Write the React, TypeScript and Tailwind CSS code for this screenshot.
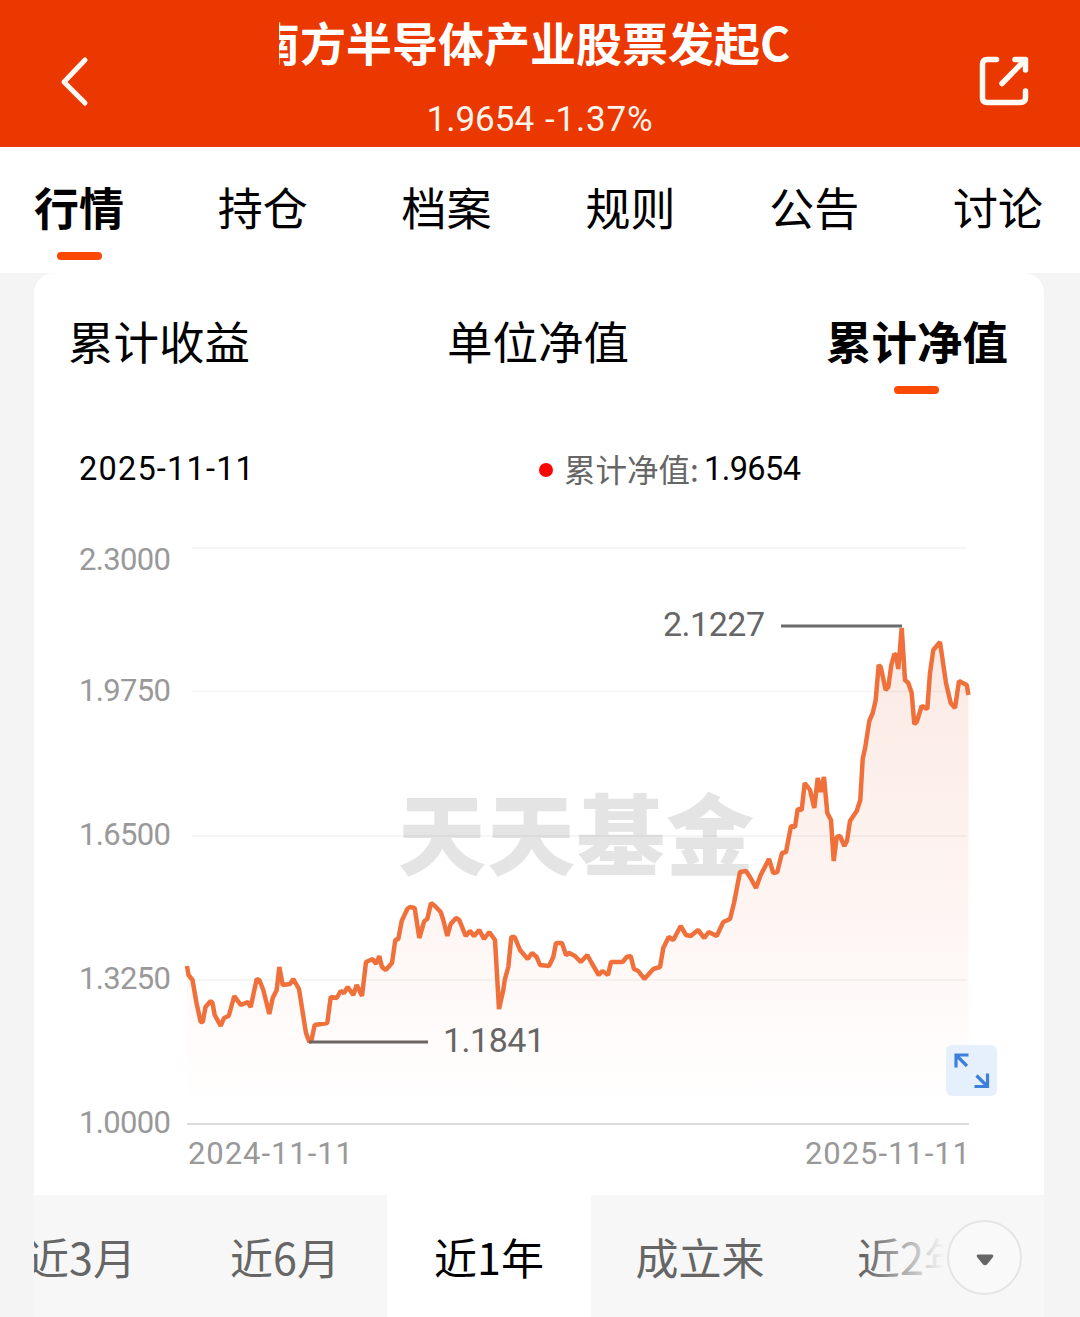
import { useState } from "react";

interface AxisLabel {
    value: string;
    y: number;
    gridY: number;
}

const pageTabs = ["行情", "持仓", "档案", "规则", "公告", "讨论"];
const chartTabs = ["累计收益", "单位净值", "累计净值"];

const ranges = [
    { label: "近3月", width: "w-[204px]" },
    { label: "近6月", width: "w-[204px]" },
    { label: "近1年", width: "w-[204px]" },
    { label: "成立来", width: "w-[218px]" },
    { label: "近2年", width: "w-[206px]" },
];

const axisLabels: AxisLabel[] = [
    { value: "2.3000", y: 570, gridY: 548 },
    { value: "1.9750", y: 701, gridY: 691.5 },
    { value: "1.6500", y: 845, gridY: 836 },
    { value: "1.3250", y: 989, gridY: 980 },
];

// Net value curve, left to right
const curve = [
    "187,966 188.5,975 192.5,980 196.5,1003 200.7,1022 202.7,1022 205.5,1007 210.7,1001 212.5,1003 214.7,1015 220.7,1026 224,1018 228.7,1016",
    "234.3,996 240.7,1005 247.7,1002 250.7,1007 256.7,979 259.3,980 263.3,990 269.3,1014 272.7,998 276.7,990 279.3,967 282.7,985 290,984",
    "293.3,979 299,989 306,1033 309.3,1042 311.5,1040 314.7,1025 327.3,1023 330.7,997 336.7,998 340.7,991 344,993 347.7,987 353.3,995",
    "356.7,985 362,996 366,962 372.7,959 376,964 379.3,956 382,967 385.7,970 392,963 395.3,940 398.3,939 401.7,921 407.3,909 410,907",
    "414.7,908 419.3,938 424.3,921 427.3,919 431,903 435,906 440.7,912 443.3,920 447.3,936 450.7,924 456,918 459.3,920 465.7,936 470,931",
    "474,936 479.3,930 484,939 489.3,932 495,940 499,1009 503.3,990 504.7,980 508.3,967 511.3,937 514.7,937 520,950 527.7,959 532,953",
    "536.7,957 540,965 549,966 553.3,957 556,943 562,943 566,955 569.3,953 575,956 580.7,962 587.3,955 591.7,963 598.7,975 602.3,971",
    "608,975 611,962 622.7,962 626.7,957 630.7,956 634,969 638.3,971 644.3,979 653.3,969 660,967 663.3,948 668.7,937 673.3,940 680.7,926",
    "686,935 690.7,936 698,930 704.3,938 708.7,932 716.7,936 723.3,922 730,919 734,903 740,872 746,871 750,877 756,888 760.7,875 769,859",
    "773.3,873 777.3,872 782,853 786,852 791,826 795,827 797.7,809 801.7,810 804.7,783 810,790 814.3,808 817.7,778 820.7,792 824,777",
    "827.3,813 831,820 833.7,861 836.7,837 840,836 844.3,846 847,841 850,821 856.7,811 860.3,800 862.7,759 865.3,747 869.3,721 872.7,713",
    "875.7,700 878.7,665 880.7,667 885.7,690 888.3,687 891.3,665 894.3,654 896,655 898.3,669 901.7,628 905,680 908.3,683 911.7,693",
    "914.3,724 916.7,722 921.7,706 927.3,709 930,673 933.3,650 940,642 946,683 950.7,703 955,708 959,681 966.7,685 968.5,695",
].join(" ");

function NetValueChart() {
    return (
        <svg viewBox="34 520 1010 675" className="block w-[1010px] h-[675px] font-['Roboto',sans-serif]">
            <defs>
                <linearGradient id="area" gradientUnits="userSpaceOnUse" x1="0" y1="626" x2="0" y2="1110">
                    <stop offset="0" stopColor="#fbe9e3" />
                    <stop offset="0.5" stopColor="#fdf3f0" />
                    <stop offset="1" stopColor="#ffffff" />
                </linearGradient>
            </defs>

            <text
                x="398"
                y="868"
                fontSize="88"
                fontWeight="900"
                fill="#e4e4e4"
                textLength="356"
                className="font-['Noto_Sans_CJK_SC',sans-serif]"
            >
                天天基金
            </text>

            <polygon points={`187,1122 ${curve} 968.5,1122`} fill="url(#area)" />

            {axisLabels.map((label) => (
                <g key={label.value}>
                    <line x1="192" x2="967" y1={label.gridY} y2={label.gridY} stroke="#000000" strokeOpacity="0.035" strokeWidth="2" />
                    <text x="79" y={label.y} fontSize="31" fill="#999999" textLength="92">
                        {label.value}
                    </text>
                </g>
            ))}
            <text x="79" y="1133" fontSize="31" fill="#999999" textLength="92">1.0000</text>
            <line x1="187" x2="969" y1="1124" y2="1124" stroke="#dddddd" strokeWidth="2" />

            <polyline points={curve} fill="none" stroke="#f0703c" strokeWidth="4.5" strokeLinejoin="bevel" />

            {/* Highest and lowest values */}
            <line x1="781" x2="902" y1="626" y2="626" stroke="#6b6b6b" strokeWidth="3" />
            <text x="663" y="636" fontSize="34" fill="#666666" textLength="102">2.1227</text>
            <line x1="309" x2="428" y1="1042" y2="1042" stroke="#6b6460" strokeWidth="3" />
            <text x="443" y="1052" fontSize="34" fill="#666666" textLength="102">1.1841</text>

            <text x="188" y="1164" fontSize="31" fill="#999999" textLength="165">2024-11-11</text>
            <text x="805" y="1164" fontSize="31" fill="#999999" textLength="165">2025-11-11</text>

            {/* Expand button */}
            <rect x="946" y="1045" width="51" height="51" rx="6" fill="#e6f0fd" />
            <g fill="none" stroke="#3d7fdb" strokeWidth="3.2">
                <path d="M968.500 1055H956V1067.500M956 1055L967 1066" />
                <path d="M974.500 1086.500H987.500V1073.500M987.500 1086.500L976.500 1075.500" />
            </g>
        </svg>
    );
}

export default function App() {
    const [activePage, setActivePage] = useState("行情");
    const [activeChart, setActiveChart] = useState("累计净值");
    const [activeRange, setActiveRange] = useState("近1年");

    return (
        <div className="w-[1080px] h-[1317px] overflow-hidden bg-[#f4f4f4] text-black font-['Noto_Sans_CJK_SC',sans-serif]">
            {/* Header */}
            <header className="h-[147px] bg-[#ea3800] text-white flex justify-between">
                <button className="w-[180px] pl-[58px] pt-[14px]" aria-label="返回">
                    <svg viewBox="0 0 34 52" className="w-[34px] h-[52px]" fill="none" stroke="#fffaf5" strokeWidth="5" strokeLinecap="round" strokeLinejoin="round">
                        <path d="M27 5L6 27L27 48" />
                    </svg>
                </button>
                <div className="w-[522px] flex flex-col items-center">
                    <div className="w-full h-[86px] overflow-hidden">
                        <h1 className="ml-[-25px] whitespace-nowrap text-[46px] leading-[82px] font-bold">
                            南方半导体产业股票发起C
                        </h1>
                    </div>
                    <div className="h-[61px] flex gap-[11px] text-[35px] leading-[68px] text-[#fff3ea] font-['Roboto',sans-serif] whitespace-nowrap">
                        <span>1.9654</span>
                        <span className="tracking-[0.8px]">-1.37%</span>
                    </div>
                </div>
                <button className="w-[180px] pl-[78px] pt-[14px]" aria-label="分享">
                    <svg viewBox="0 0 52 52" className="w-[52px] h-[52px]" fill="none" stroke="#fffaf5" strokeWidth="5.5" strokeLinecap="round" strokeLinejoin="round">
                        <path d="M18.500 4.500H9Q4.500 4.500 4.500 9V43Q4.500 47.500 9 47.500H42Q47.500 47.500 47.500 43V36" />
                        <path d="M37 4.500H47.500V15M46 6L24 28.500" />
                    </svg>
                </button>
            </header>

            {/* Page tabs */}
            <nav className="h-[126px] bg-white pl-[34px] pr-[37px] flex justify-between">
                {pageTabs.map((tab) => (
                    <button key={tab} onClick={() => setActivePage(tab)} className="flex flex-col items-center">
                        <span className={tab === activePage ? "text-[45px] leading-[105px] h-[105px] pt-[7px] font-bold" : "text-[45px] leading-[105px] h-[105px] pt-[7px]"}>
                            {tab}
                        </span>
                        {tab === activePage && <span className="w-[45px] h-[8px] rounded-full bg-[#fa4a05]" />}
                    </button>
                ))}
            </nav>

            <main className="ml-[34px] w-[1010px] h-[1044px] bg-white rounded-t-[20px] flex flex-col overflow-hidden">
                <div className="h-[147px] pl-[34px] pr-[36px] flex justify-between">
                    {chartTabs.map((tab) => (
                        <button key={tab} onClick={() => setActiveChart(tab)} className="flex flex-col items-center">
                            <span className={tab === activeChart ? "text-[45.5px] leading-[113px] h-[113px] pt-[11px] font-bold" : "text-[45.5px] leading-[113px] h-[113px] pt-[11px]"}>
                                {tab}
                            </span>
                            {tab === activeChart && <span className="w-[45px] h-[8px] rounded-full bg-[#fa4a05]" />}
                        </button>
                    ))}
                </div>

                {/* Selected day */}
                <div className="h-[99px] mb-[1px] pl-[45px] flex items-center">
                    <span className="w-[460px] text-[32.5px] tracking-[1.2px] font-['Roboto',sans-serif]">2025-11-11</span>
                    <span className="w-[14px] h-[14px] rounded-full bg-[#f80505]" />
                    <span className="ml-[11px] mt-[-2px] w-[140px] text-[31.5px] text-[#666666] whitespace-nowrap">累计净值:</span>
                    <span className="text-[32.5px] tracking-[-0.6px] font-['Roboto',sans-serif]">1.9654</span>
                </div>

                <NetValueChart />

                {/* Time ranges */}
                <div className="relative h-[122px] bg-[#f7f7f7] overflow-hidden">
                    <div className="flex ml-[-55px] w-[1065px]">
                        {ranges.map((range) => (
                            <button
                                key={range.label}
                                onClick={() => setActiveRange(range.label)}
                                className={`${range.width} shrink-0 h-[122px] text-[43px] ${range.label === activeRange ? "bg-white text-black" : "text-[#666666]"}`}
                            >
                                {range.label}
                            </button>
                        ))}
                    </div>
                    <div className="absolute top-0 right-0 h-full w-[180px] bg-linear-to-r from-[#f7f7f7]/0 to-[#f7f7f7] to-45%" />
                    <button className="absolute right-[22px] top-[25px] w-[75px] h-[75px] rounded-full bg-[#f9f9f9] border-2 border-[#e5e5e5] flex items-center justify-center" aria-label="更多">
                        <svg viewBox="0 0 18 12" className="w-[18px] h-[12px] mt-[4px]" fill="#666666">
                            <path d="M2 0.500H16Q18 1 17 3L11 10.500Q9 12 7 10.500L1 3Q0 1 2 0.500Z" />
                        </svg>
                    </button>
                </div>
            </main>
        </div>
    );
}
